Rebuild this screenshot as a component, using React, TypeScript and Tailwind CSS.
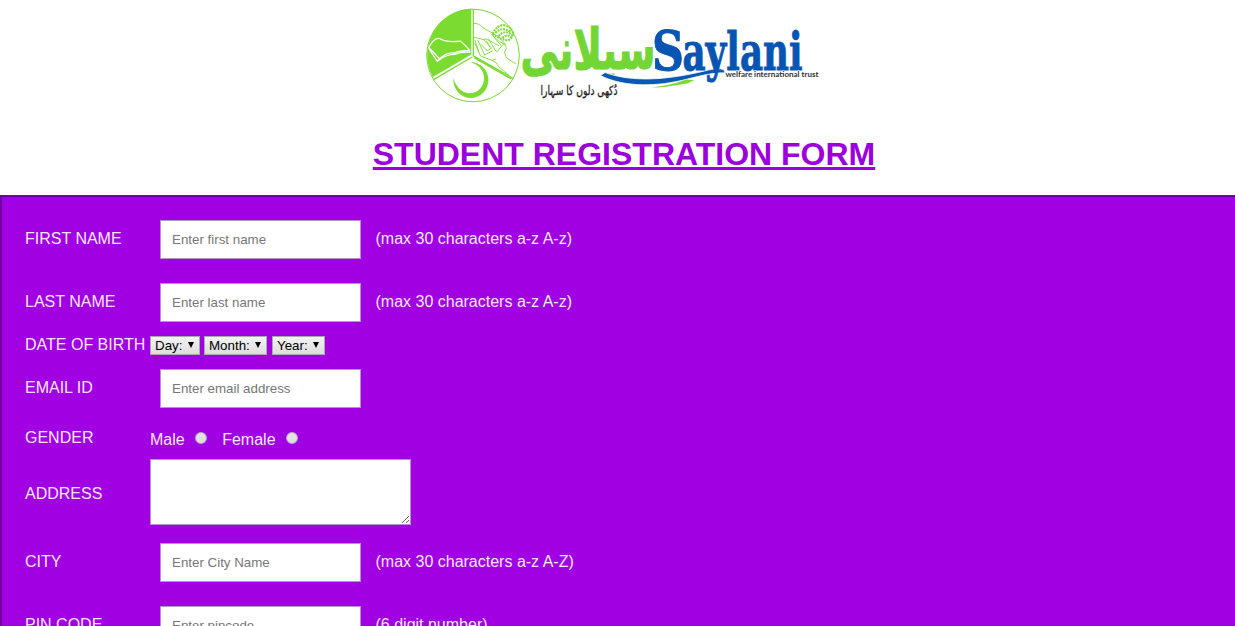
import type { ReactNode } from "react";

function Logo() {
  return (
    <svg className="block h-[110px] w-[405px]" viewBox="421.5 0 405 110" role="img" aria-label="Saylani">
      {/* emblem */}
      <circle cx="472.5" cy="55.5" r="46.3" fill="#fff" stroke="#79d62f" strokeWidth="1" />
      <path d="M470.8 8.5 A46.6 46.6 0 0 0 432.3 77 L470.8 54.6 Z" fill="#7bdb31" />
      <path d="M472.8 9 V55.8 L512.5 78.2 M471.8 57 L433 79.6 M473.6 57.6 L511 79" fill="none" stroke="#7bdb31" strokeWidth="1.3" />
      <path d="M428.3 47.5 Q433 38 438.5 38.3 Q446 43 460 41.2 Q464 44 469.2 50.5 Q459 50.3 454 53 Q446 52 439 58.8 Z M439 58.8 L436.8 61.3 L428.3 48.5 M437.6 60.8 Q446 53.8 454.5 54.4 Q461 51.3 469.3 52.3 V50.5" fill="none" stroke="#fff" strokeWidth="1.3" strokeLinejoin="round" />
      <g fill="none" stroke="#7bdb31" strokeWidth="0.9" strokeLinecap="round" strokeLinejoin="round">
        <path d="M473.5 23.5 Q479 23 482 27.5 L491 32.5 Q499 35.5 505 44.5 Q498 42 495 38.5 M473.5 37.5 L479.5 38.5 Q482 40.5 486 39 L498 45.5 M491 34 L500.5 45.5" />
        <path d="M474.500 40 L478 52 M477.5 40.5 L484 55 M483 39.5 L490 47.5 L486 41 M488 39 L496 52 L503 44 Q508 47 504 52 L506 58 L515 63.5 M474.500 43.500 L480 56 L492 60.500 Q496 62 498 66.500 L508 75 M480 44 L487 51 L491 48 M484 55 L492 51 M492 60.5 L495 59" />
      </g>
      <path d="M492 34 Q496 25.5 503 25 Q511 27 512.5 33 Q512 39 507 40.5 Q499 39 492 34 M495 33 Q501 26 510 32 M498 36 Q504 29 512 35 M502 38 Q507 33 511 38" fill="none" stroke="#7bdb31" strokeWidth="2.1" strokeDasharray="2 .9" />
      <path d="M468.8 61.7 C480 62 488 70 488 80 C487.500 91 479 98 470.500 98 C460 98 453 90 452.500 78 C456 87 461 93 469 93.300 C478 93 484 86 483.500 77.500 C483 69 477 64 468.8 61.700Z" fill="#7bdb31" />

      {/* name in Urdu */}
      <text x="655" y="69" fontSize="57" fontWeight="700" fill="#72d634" stroke="#72d634" strokeWidth="1.2" direction="rtl" textLength="135" lengthAdjust="spacingAndGlyphs" className="font-['DejaVu_Sans',sans-serif]">سیلانی</text>

      {/* swooshes */}
      <path d="M600 75.500 L604.500 72.500 C632 82.500 666 80 704 71 C716 67.500 726 68 724 73 C713 72 696 77 681 80.500 C651 87.500 620 86 600 75.500Z" fill="#0a58b5" stroke="#fff" strokeWidth=".8" />
      <path d="M651 87.500 C666 86 675 83 686 79.500 L694 80 L687 83.500 C674 85 664 88 651 87.500Z" fill="#7bdb31" />

      {/* name in Latin script */}
      <g fill="#0755b3" stroke="#0755b3" strokeWidth="1" fontWeight="700" className="font-['DejaVu_Serif',serif]">
        <text x="651.5" y="70" fontSize="55" textLength="32" lengthAdjust="spacingAndGlyphs">S</text>
        <text x="682" y="70" fontSize="52" textLength="120" lengthAdjust="spacingAndGlyphs">aylani</text>
      </g>
      <text x="725" y="77.300" fontSize="7.500" fill="#333" stroke="#fff" strokeWidth="1" paintOrder="stroke" textLength="93" lengthAdjust="spacingAndGlyphs" className="font-['Lato',sans-serif] font-bold">welfare international trust</text>
      <text x="617" y="95" fontSize="13" fill="#222" stroke="#222" strokeWidth=".3" direction="rtl" textLength="77" lengthAdjust="spacingAndGlyphs" className="font-['DejaVu_Sans',sans-serif]">دُکھی دلوں کا سہارا</text>
    </svg>
  );
}

function Row({ label, height, children }: { label: string; height: string; children: ReactNode }) {
  return (
    <div className={`flex shrink-0 items-center ${height}`}>
      <div className="w-[125px] shrink-0 pb-[2px] leading-[18px] whitespace-nowrap">{label}</div>
      {children}
    </div>
  );
}

function Field({ placeholder, hint }: { placeholder: string; hint?: string }) {
  return (
    <>
      <input
        type="text"
        placeholder={placeholder}
        className="ml-[10px] h-[39px] w-[201px] border border-[#b891c9] bg-white px-[11px] text-[13.333px] text-black outline-none placeholder:text-[#777]"
      />
      {hint && <span className="ml-[14.5px] pb-[2px] leading-[18px]">{hint}</span>}
    </>
  );
}

function Picker({ text, width }: { text: string; width: string }) {
  return (
    <button type="button" className={`flex h-[19px] items-center justify-between border border-[#a9a9a9] bg-linear-to-b from-[#f3f3f3] to-[#dddddd] pr-[5px] pl-[4px] text-[13.333px] leading-[17px] text-black ${width}`}>
      <span>{text}</span>
      <svg className="mb-[2px] h-[6px] w-[6px]" viewBox="0 0 6 6"><path d="M0 0H6L3 6Z" /></svg>
    </button>
  );
}

function Radio({ label }: { label: string }) {
  return (
    <label className="flex items-center">
      <span className="mt-[2px] leading-[18px]">{label}</span>
      <input type="radio" name="gender" className="mb-[2px] ml-[10px] h-[12px] w-[12px] appearance-none rounded-full border border-[#b9a9c0] bg-linear-to-b from-[#e4e4e4] to-[#dddddd] checked:bg-[#555]" />
    </label>
  );
}

export default function App() {
  return (
    <div className="h-[626px] w-full overflow-hidden bg-white font-['Liberation_Sans',Arial,sans-serif] text-[16px]">
      <div className="w-[1248px]">
        <header className="flex h-[195px] flex-col items-center">
          <Logo />
          <h1 className="mt-[26px] text-[32px] leading-[36px] font-bold whitespace-nowrap text-[#9b00dc] underline">STUDENT REGISTRATION FORM</h1>
        </header>
        <form className="flex h-[480px] flex-col border-2 border-[#6c009c] bg-[#a000e2] pt-[11px] pl-[23px] text-[#fbe9ff]">
          <Row label="FIRST NAME" height="h-[63px]"><Field placeholder="Enter first name" hint="(max 30 characters a-z A-z)" /></Row>
          <Row label="LAST NAME" height="h-[63px]"><Field placeholder="Enter last name" hint="(max 30 characters a-z A-z)" /></Row>
          <Row label="DATE OF BIRTH" height="h-[23px]">
            <div className="flex">
              <Picker text="Day:" width="w-[50px]" />
              <Picker text="Month:" width="ml-[4px] w-[63px]" />
              <Picker text="Year:" width="ml-[5px] w-[53px]" />
            </div>
          </Row>
          <Row label="EMAIL ID" height="h-[63px]"><Field placeholder="Enter email address" /></Row>
          <Row label="GENDER" height="h-[37px]">
            <div className="flex gap-[15.5px]"><Radio label="Male" /><Radio label="Female" /></div>
          </Row>
          <Row label="ADDRESS" height="h-[76px] -mb-[2px]">
            <textarea className="mb-[6px] h-[66px] w-[261px] resize border border-[#b891c9] bg-white text-black outline-none" />
          </Row>
          <Row label="CITY" height="h-[63px]"><Field placeholder="Enter City Name" hint="(max 30 characters a-z A-Z)" /></Row>
          <Row label="PIN CODE" height="h-[63px]"><Field placeholder="Enter pincode" hint="(6 digit number)" /></Row>
        </form>
      </div>
    </div>
  );
}
